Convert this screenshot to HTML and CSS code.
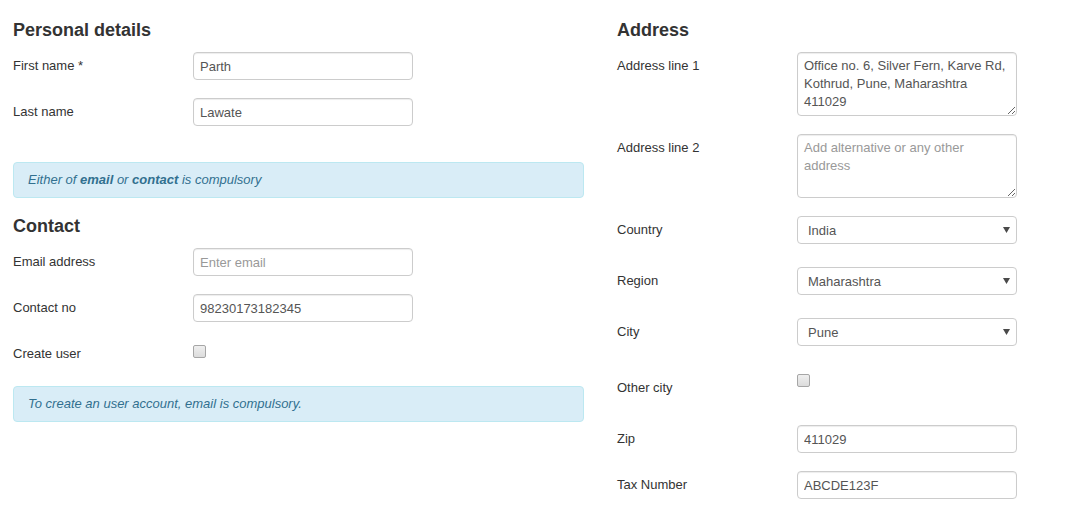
FILE: index.html
```html
<!DOCTYPE html>
<html lang="en">
<head>
<meta charset="utf-8">
<title>Form</title>
<link rel="stylesheet" href="styles.css">
</head>
<body>
<div class="page">
  <div class="col">
    <h3 class="title">Personal details</h3>
    <div class="field">
      <label class="label">First name *</label>
      <input class="control" type="text" value="Parth">
    </div>
    <div class="field">
      <label class="label">Last name</label>
      <input class="control" type="text" value="Lawate">
    </div>
    <div class="alert alert-first">Either of <b>email</b> or <b>contact</b> is compulsory</div>
    <h3 class="title title-sub">Contact</h3>
    <div class="field">
      <label class="label">Email address</label>
      <input class="control" type="text" placeholder="Enter email">
    </div>
    <div class="field">
      <label class="label">Contact no</label>
      <input class="control" type="text" value="98230173182345">
    </div>
    <div class="field">
      <label class="label">Create user</label>
      <input class="check" type="checkbox">
    </div>
    <div class="alert">To create an user account, email is compulsory.</div>
  </div>
  <div class="col">
    <h3 class="title">Address</h3>
    <div class="field field-top">
      <label class="label">Address line 1</label>
      <textarea class="control area">Office no. 6, Silver Fern, Karve Rd, Kothrud, Pune, Maharashtra 411029</textarea>
    </div>
    <div class="field field-top">
      <label class="label">Address line 2</label>
      <textarea class="control area" placeholder="Add alternative or any other address"></textarea>
    </div>
    <div class="field field-select">
      <label class="label">Country</label>
      <div class="select-wrap">
        <select class="control select"><option>India</option></select>
        <svg class="arrow" width="7" height="6" viewBox="0 0 7 6"><path d="M0 0H7L3.5 6Z" fill="#4a4a4a"/></svg>
      </div>
    </div>
    <div class="field field-select">
      <label class="label">Region</label>
      <div class="select-wrap">
        <select class="control select"><option>Maharashtra</option></select>
        <svg class="arrow" width="7" height="6" viewBox="0 0 7 6"><path d="M0 0H7L3.5 6Z" fill="#4a4a4a"/></svg>
      </div>
    </div>
    <div class="field field-select">
      <label class="label">City</label>
      <div class="select-wrap">
        <select class="control select"><option>Pune</option></select>
        <svg class="arrow" width="7" height="6" viewBox="0 0 7 6"><path d="M0 0H7L3.5 6Z" fill="#4a4a4a"/></svg>
      </div>
    </div>
    <div class="field field-tall">
      <label class="label">Other city</label>
      <input class="check" type="checkbox">
    </div>
    <div class="field">
      <label class="label">Zip</label>
      <input class="control" type="text" value="411029">
    </div>
    <div class="field">
      <label class="label">Tax Number</label>
      <input class="control" type="text" value="ABCDE123F">
    </div>
  </div>
</div>
</body>
</html>
```

FILE: styles.css
```css
html, body {
  margin: 0;
  padding: 0;
  background: #fff;
}

body {
  font-family: "Liberation Sans", Arial, Helvetica, sans-serif;
  font-size: 13px;
  line-height: 18px;
  color: #333;
}

.page {
  display: grid;
  grid-template-columns: 571px 1fr;
  column-gap: 33px;
  padding: 0 13px;
}

.col {
  display: flex;
  flex-direction: column;
}

.title {
  margin: 20px 0 12px;
  font-size: 18px;
  line-height: 20px;
  font-weight: bold;
  color: #333;
}

.title-sub {
  margin-top: 0;
}

.field {
  display: flex;
  align-items: center;
  min-height: 28px;
  margin-bottom: 18px;
}

.field-top {
  align-items: flex-start;
}

.field-top .label {
  padding-top: 5px;
}

.field-select {
  margin-bottom: 23px;
}

.field-tall {
  min-height: 38px;
}

.label {
  width: 180px;
  flex: none;
  color: #333;
}

.control {
  box-sizing: border-box;
  width: 220px;
  height: 28px;
  margin: 0;
  padding: 0 6px;
  border: 1px solid #ccc;
  border-radius: 4px;
  background: #fff;
  box-shadow: inset 0 1px 1px rgba(0, 0, 0, 0.075);
  font-family: "Liberation Sans", Arial, Helvetica, sans-serif;
  font-size: 13px;
  color: #555;
  outline: none;
}

.control::placeholder {
  color: #999;
}

.area {
  height: 64px;
  padding: 4px 6px;
  line-height: 18px;
  resize: vertical;
  display: block;
}

.select-wrap {
  position: relative;
  width: 220px;
  height: 28px;
}

.select {
  -webkit-appearance: none;
  appearance: none;
  padding: 0 20px 0 10px;
  box-shadow: none;
}

.arrow {
  position: absolute;
  right: 7px;
  top: 11px;
  pointer-events: none;
}

.check {
  -webkit-appearance: none;
  appearance: none;
  align-self: flex-start;
  box-sizing: border-box;
  width: 13px;
  height: 13px;
  margin: 5px 0 0 0;
  border: 1px solid #a6a6a6;
  border-radius: 2px;
  background: linear-gradient(#efefef, #dcdcdc);
}

.alert {
  box-sizing: border-box;
  padding: 8px 14px;
  border: 1px solid #bce8f1;
  border-radius: 4px;
  background: #d9edf7;
  color: #31708f;
  font-style: italic;
  line-height: 18px;
  margin-bottom: 18px;
}

.alert-first {
  margin-top: 18px;
}
```
